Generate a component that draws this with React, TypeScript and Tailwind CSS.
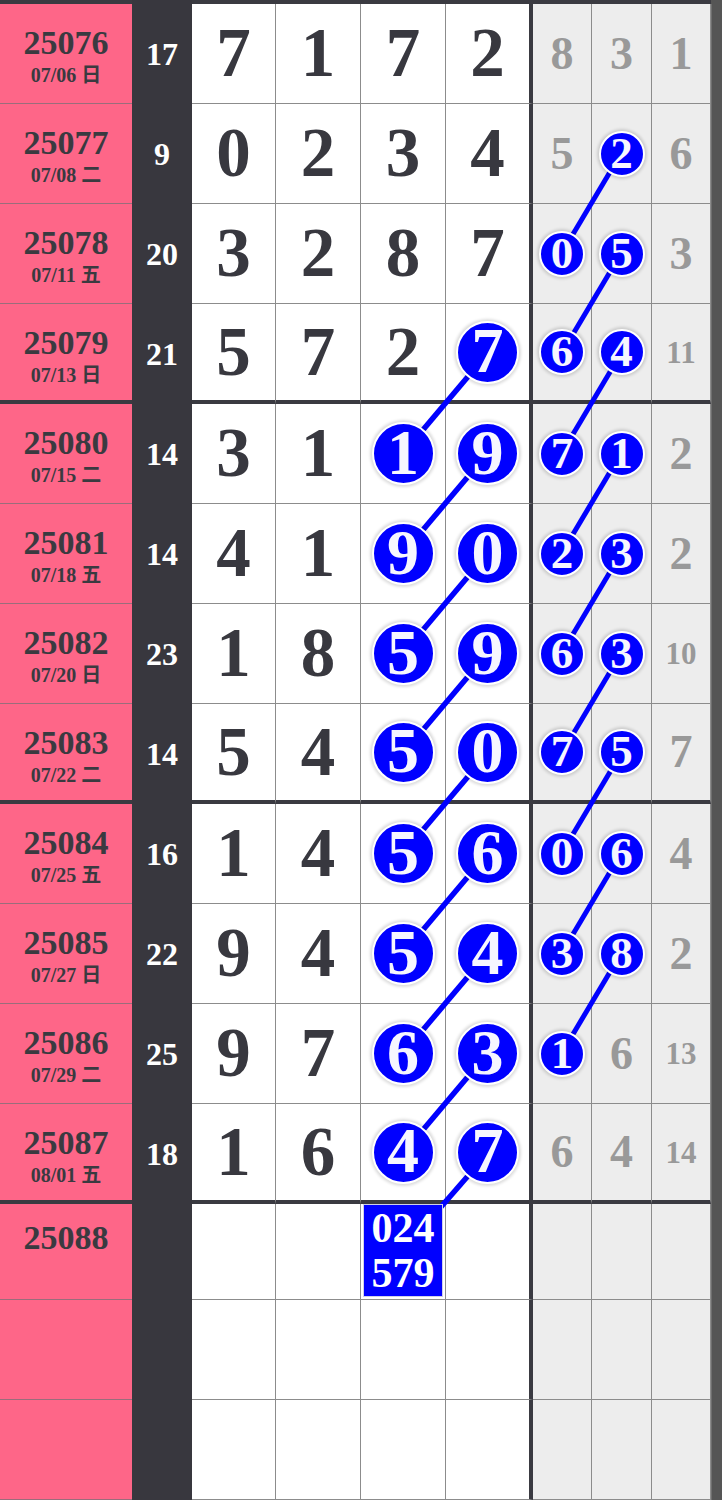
import React from "react";

type Row = {
  id: string;
  date?: string;
  sum?: number;
  d?: string[];
  g?: string[];
  box?: string[];
  short?: boolean;
};

// "o" prefix = circled number
const rows: Row[] = [
  { id: "25076", date: "07/06 日", sum: 17, d: ["7", "1", "7", "2"], g: ["8", "3", "1"] },
  { id: "25077", date: "07/08 二", sum: 9, d: ["0", "2", "3", "4"], g: ["5", "o2", "6"] },
  { id: "25078", date: "07/11 五", sum: 20, d: ["3", "2", "8", "7"], g: ["o0", "o5", "3"] },
  { id: "25079", date: "07/13 日", sum: 21, d: ["5", "7", "2", "o7"], g: ["o6", "o4", "11"] },
  { id: "25080", date: "07/15 二", sum: 14, d: ["3", "1", "o1", "o9"], g: ["o7", "o1", "2"] },
  { id: "25081", date: "07/18 五", sum: 14, d: ["4", "1", "o9", "o0"], g: ["o2", "o3", "2"] },
  { id: "25082", date: "07/20 日", sum: 23, d: ["1", "8", "o5", "o9"], g: ["o6", "o3", "10"] },
  { id: "25083", date: "07/22 二", sum: 14, d: ["5", "4", "o5", "o0"], g: ["o7", "o5", "7"] },
  { id: "25084", date: "07/25 五", sum: 16, d: ["1", "4", "o5", "o6"], g: ["o0", "o6", "4"] },
  { id: "25085", date: "07/27 日", sum: 22, d: ["9", "4", "o5", "o4"], g: ["o3", "o8", "2"] },
  { id: "25086", date: "07/29 二", sum: 25, d: ["9", "7", "o6", "o3"], g: ["o1", "6", "13"] },
  { id: "25087", date: "08/01 五", sum: 18, d: ["1", "6", "o4", "o7"], g: ["6", "4", "14"] },
  { id: "25088", box: ["024", "579"], short: true },
  { id: "" },
  { id: "" },
];

const TOP = 4;
const cy = (i: number) => TOP + 100 * i + 49.5;
const COL3 = 403;
const COL4 = 487.5;
const G1 = 561.5;
const G2 = 621;

const thinB = "border-b border-b-[#8c8c8c]";
const thickB = "border-b-4 border-b-[#3a3a41]";

function MainCell({ v, thick, last }: { v?: string; thick: boolean; last?: boolean }) {
  const circled = v?.startsWith("o");
  const n = circled ? v!.slice(1) : v;
  return (
    <div
      className={`flex items-center justify-center bg-white ${thick ? thickB : thinB} ${
        last ? "border-r-4 border-r-[#3a3a41]" : "border-r border-r-[#8c8c8c]"
      }`}
    >
      {circled ? (
        <div className="relative z-10 flex h-[63px] w-[63px] items-center justify-center rounded-full border-2 border-white bg-[#0000ff] text-[64px] font-bold leading-none text-[#f6f6ff] shadow-[0_0_3px_2px_rgba(0,0,0,0.14)]">
          <span className="-mt-[2px]">{n}</span>
        </div>
      ) : (
        <span className="text-[69px] font-bold leading-none text-[#38383f]">{n}</span>
      )}
    </div>
  );
}

function GrayCell({ v, thick }: { v?: string; thick: boolean }) {
  const circled = v?.startsWith("o");
  const n = circled ? v!.slice(1) : v;
  return (
    <div
      className={`flex items-center justify-center bg-[#ededed] border-r border-r-[#8c8c8c] ${
        thick ? thickB : thinB
      }`}
    >
      {circled ? (
        <div className="relative z-10 flex h-[46px] w-[46px] items-center justify-center rounded-full border-2 border-white bg-[#0000ff] text-[45px] font-bold leading-none text-[#f6f6ff] shadow-[0_0_3px_2px_rgba(0,0,0,0.14)]">
          <span className="-mt-[1px]">{n}</span>
        </div>
      ) : (
        <span
          className={`font-bold leading-none text-[#999999] ${
            n && n.length > 1 ? "text-[31px]" : "text-[46px]"
          }`}
        >
          {n}
        </span>
      )}
    </div>
  );
}

export default function App() {
  const bigLines: [number, number, number, number][] = [];
  for (let i = 3; i <= 11; i++) bigLines.push([COL4, cy(i), COL3, i === 11 ? 1250.5 : cy(i + 1)]);
  const smallLines: [number, number, number, number][] = [];
  for (let i = 1; i <= 9; i++) smallLines.push([G2, cy(i), G1, cy(i + 1)]);

  return (
    <div className="relative h-[1500px] w-[722px] overflow-hidden bg-white font-['Liberation_Serif','Noto_Sans_CJK_SC',serif]">
      <div className="grid h-[4px] grid-cols-[132px_60px_401px_118px_11px]">
        <div className="bg-[#3a3a41]" />
        <div className="bg-[#38373e]" />
        <div className="bg-[#3a3a41]" />
        <div className="bg-[#3a3a41]" />
        <div className="bg-[#555555]" />
      </div>
      {rows.map((r, i) => {
        const thick = i % 4 === 3;
        const rowH = r.short ? "h-[96px]" : "h-[100px]";
        return (
          <div
            key={i}
            className={`grid grid-cols-[132px_60px_84px_85px_85px_87px_59px_60px_59px_11px] overflow-hidden ${rowH}`}
          >
            <div
              className={`flex flex-col items-center bg-[#fe6688] text-[#3a3a40] ${
                thick ? thickB : "border-b border-b-[#9a6d7b]"
              } ${r.date ? "pt-[22px]" : "pt-[17px]"}`}
            >
              <span className="text-[34px] font-bold leading-[34px]">{r.id}</span>
              {r.date && <span className="mt-[3px] text-[20px] font-bold leading-[24px]">{r.date}</span>}
            </div>
            <div className="flex items-center justify-center bg-[#38373e]">
              <span className="text-[32px] font-bold leading-none text-white">{r.sum}</span>
            </div>
            {[0, 1, 2, 3].map((c) =>
              r.box && c === 2 ? (
                <div
                  key={c}
                  className={`bg-white px-[2px] pb-[2px] border-r border-r-[#8c8c8c] ${thick ? thickB : thinB}`}
                >
                  <div className="relative z-10 flex h-full flex-col items-center justify-center border border-[#cfcfe8] bg-[#0000ff] text-[42px] font-bold leading-[45px] text-white">
                    {r.box.map((t) => (
                      <span key={t}>{t}</span>
                    ))}
                  </div>
                </div>
              ) : (
                <MainCell key={c} v={r.d?.[c]} thick={thick} last={c === 3} />
              )
            )}
            {[0, 1, 2].map((c) => (
              <GrayCell key={c} v={r.g?.[c]} thick={thick} />
            ))}
            <div className="border-l border-l-[#6e6e6e] bg-[#555555]" />
          </div>
        );
      })}
      <svg className="pointer-events-none absolute left-0 top-0" width={722} height={1500}>
        {bigLines.map(([x1, y1, x2, y2], k) => (
          <line key={"b" + k} x1={x1} y1={y1} x2={x2} y2={y2} stroke="#0000ff" strokeWidth={5.5} />
        ))}
        {smallLines.map(([x1, y1, x2, y2], k) => (
          <line key={"s" + k} x1={x1} y1={y1} x2={x2} y2={y2} stroke="#0000ff" strokeWidth={5} />
        ))}
      </svg>
    </div>
  );
}
